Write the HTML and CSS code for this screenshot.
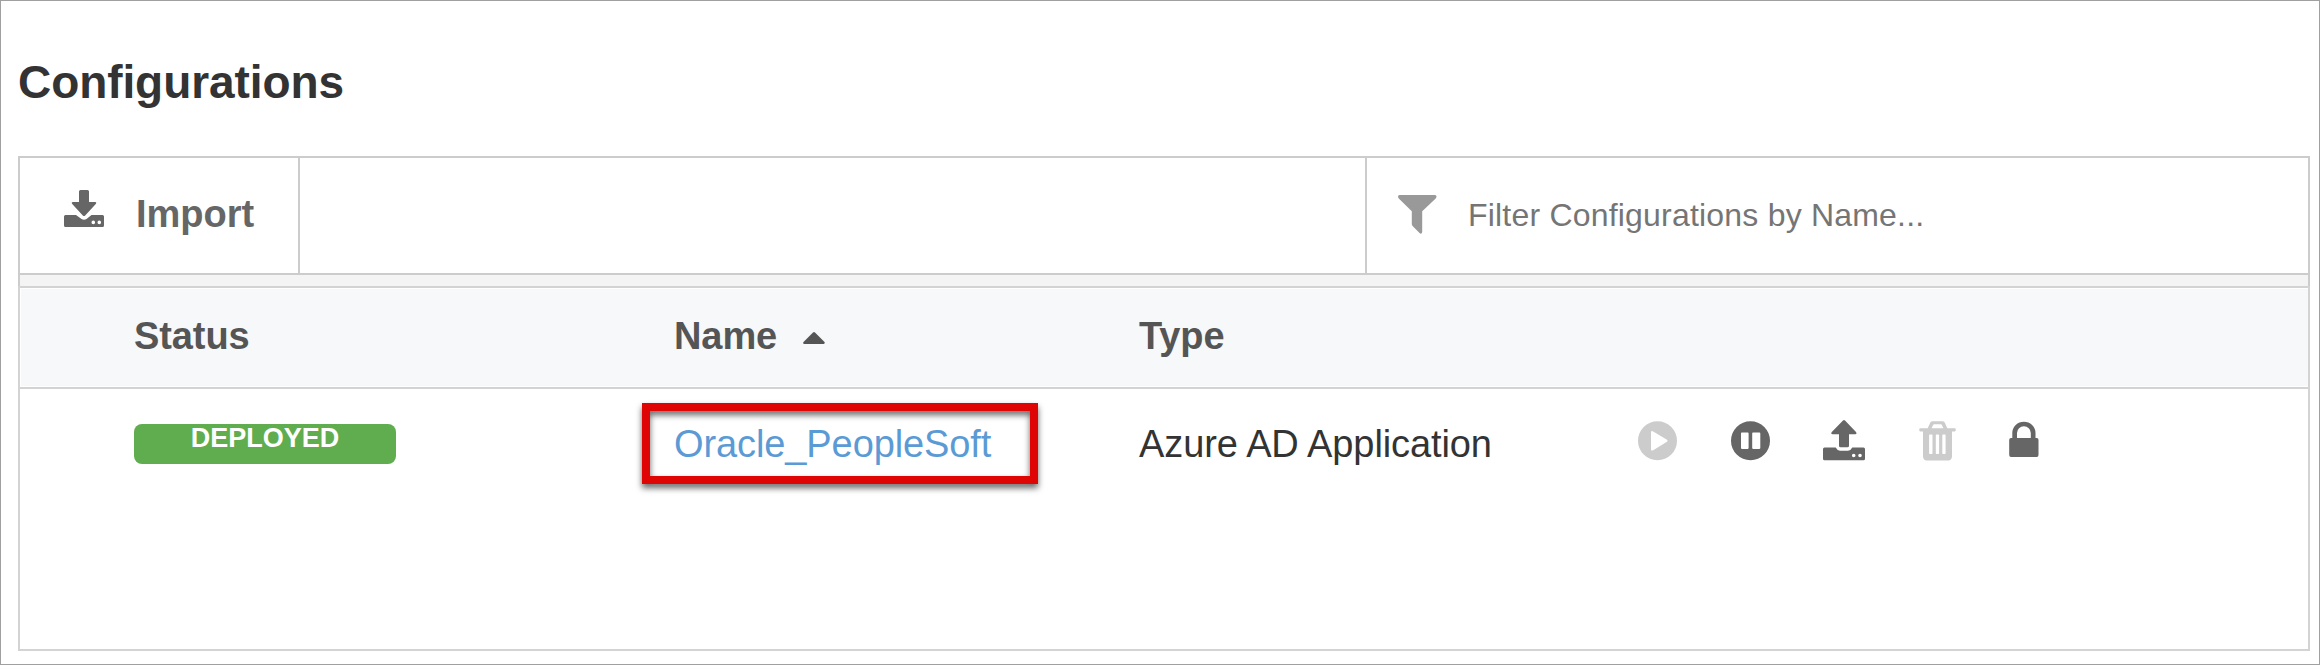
FILE: index.html
```html
<!DOCTYPE html>
<html lang="en">
<head>
<meta charset="utf-8">
<title>Configurations</title>
<link rel="stylesheet" href="styles.css">
</head>
<body>
<main class="page">
  <h1 class="title">Configurations</h1>
  <section class="panel">
    <div class="toolbar">
      <button class="import" type="button">
        <svg class="import-icon" width="40" height="37" viewBox="0 0 40 37" fill="#666">
          <path d="M16.500 0h7q1.500 0 1.500 1.500V12h6.200q1.800.2.800 1.700L21.200 25.400q-1.200 1-2.400 0L8 13.700q-1-1.500.8-1.700H15V1.500Q15 0 16.500 0z"/>
          <path fill-rule="evenodd" d="M1.500 25H12l5.500 4q2.500 1.500 5 0l5-4h11q1.500 0 1.500 1.500v9q0 1.500-1.500 1.500h-37Q0 37 0 35.500v-9Q0 25 1.500 25zM29.300 30.600a1.800 1.800 0 1 0 0 3.600 1.800 1.800 0 0 0 0-3.600zm6 0a1.800 1.800 0 1 0 0 3.600 1.800 1.800 0 0 0 0-3.600z"/>
        </svg>
        <span>Import</span>
      </button>
      <label class="filter">
        <svg width="39" height="39" viewBox="0 0 39 39" fill="#999">
          <path d="M1.500 0h35.500q1.500.2 1.500 1.500 0 1-.8 1.900L24.200 16.200V37q-.5 2.400-2.400 1.300L14.600 31q-.8-.9-.8-2V16.200L.8 3.400Q0 2.500 0 1.500 0 .2 1.500 0z"/>
        </svg>
        <input class="filter-input" type="text" placeholder="Filter Configurations by Name...">
      </label>
    </div>
    <div class="strip"></div>
    <div class="grid">
      <div class="columns head">
        <span>Status</span>
        <span class="sorted">Name
          <svg class="caret" width="22" height="12" viewBox="0 0 22 12" fill="#555"><path d="M10 .5q1-.8 2 0L21.500 10q.8 1.400-.8 2H1.200Q-.4 11.400.5 10z"/></svg>
        </span>
        <span>Type</span>
      </div>
      <div class="columns row">
        <span class="badge">DEPLOYED</span>
        <span class="name"><a class="link">Oracle_PeopleSoft</a><i class="highlight"></i></span>
        <span class="type">Azure AD Application</span>
        <div class="actions">
          <svg width="39" height="41" viewBox="0 0 39 41" fill="#ccc"><path fill-rule="evenodd" d="M19.500 1.300a19.500 19.500 0 1 0 0 39 19.500 19.500 0 0 0 0-39zM13 12.200q.2-1.700 1.800-1L29 19.800q1.300 1 0 2L14.800 30.400q-1.600.7-1.800-1z"/></svg>
          <svg width="39" height="41" viewBox="0 0 39 41" fill="#666"><path fill-rule="evenodd" d="M19.500 1.300a19.500 19.500 0 1 0 0 39 19.500 19.500 0 0 0 0-39zM10.800 12.600h6q.8 0 .8.800v14.700q0 .8-.8.800h-6q-.8 0-.8-.8V13.400q0-.8.8-.8zm11.200 0h6.500q.8 0 .8.800v14.700q0 .8-.8.800H22q-.8 0-.8-.8V13.400q0-.8.8-.8z"/></svg>
          <svg width="42" height="41" viewBox="0 0 42 41" fill="#666">
            <path d="M20 .5q1-.8 2 0L33 12q1.300 1.800-.8 2.200H26v11.500q0 1.500-1.500 1.500h-7q-1.500 0-1.500-1.500V14.200H9.600Q7.400 13.800 8.800 12z"/>
            <path fill-rule="evenodd" d="M1.500 27.500h11.200q1.600 3.200 4.300 3.200h8q2.700 0 4.300-3.200h11.200q1.500 0 1.500 1.500v9.800q0 1.500-1.500 1.500h-39Q0 40.300 0 38.800V29q0-1.500 1.500-1.500zM30.700 33.700a1.800 1.800 0 1 0 0 3.600 1.800 1.800 0 0 0 0-3.600zm6.300 0a1.800 1.800 0 1 0 0 3.600 1.800 1.800 0 0 0 0-3.600z"/>
          </svg>
          <svg width="37" height="41" viewBox="0 0 37 41" fill="#ccc"><path fill-rule="evenodd" d="M1.200 8.300h7.500L11.300 2.600q.8-1.300 2.400-1.300h9.600q1.600 0 2.400 1.300l2.600 5.700h7.500q.9.200.9.900v1.300q0 .8-.9.900H33V36.500q-.4 3.800-3.700 4H7.700Q4.400 40.300 4 36.500V11.400H1.200q-.9-.1-.9-.9V9.200q0-.7.9-.9zM12.600 8.300h11.800l-1.600-3.500q-.3-.5-.9-.5h-6.800q-.6 0-.9.500zM10.900 14.500q-.8 0-.8.800v17.900q0 .8.800.8h1.800q.8 0 .8-.8V15.300q0-.8-.8-.8zm6.700 0q-.8 0-.8.800v17.900q0 .8.8.8h1.700q.8 0 .8-.8V15.300q0-.8-.8-.8zm6.500 0q-.8 0-.8.800v17.900q0 .8.8.8h1.700q.8 0 .8-.8V15.300q0-.8-.8-.8z"/></svg>
          <svg width="30" height="41" viewBox="0 0 30 41" fill="#666"><path fill-rule="evenodd" d="M3.300 18v-5A11.600 11.300 0 0 1 26.500 13v5h1.300q1.700.2 1.700 2V35q0 1.800-1.700 2H2Q.3 36.800.2 35V20q.1-1.800 1.800-2zM8 18H21.800v-5A6.900 6.700 0 0 0 8 13z"/></svg>
        </div>
      </div>
    </div>
  </section>
</main>
</body>
</html>
```
FILE: styles.css
```css
* {
  box-sizing: border-box;
}

body {
  margin: 0;
  background: #fff;
  font-family: "Liberation Sans", Arial, sans-serif;
  font-size: 38px;
  color: #333;
}

svg {
  display: block;
  flex: none;
}

.page {
  display: flex;
  flex-direction: column;
  height: 665px;
  padding: 51px 9px 13px 17px;
  border: 1px solid #a0a0a0;
}

.title {
  margin: 0 0 44px;
  font-size: 46px;
  line-height: 60px;
  letter-spacing: -.08px;
}

.panel {
  display: flex;
  flex: 1;
  flex-direction: column;
}

.toolbar {
  display: flex;
  justify-content: space-between;
  height: 119px;
  border: 2px solid #ccc;
}

.import {
  display: flex;
  align-items: center;
  gap: 32px;
  width: 280px;
  padding: 0 0 3px 44px;
  border: 0;
  border-right: 2px solid #ccc;
  background: none;
  font: bold 38px/48px "Liberation Sans", Arial, sans-serif;
  color: #666;
}

.import-icon {
  margin-bottom: 11px;
}

.filter {
  display: flex;
  align-items: center;
  gap: 31px;
  width: 943px;
  padding: 0 0 2px 31px;
  border-left: 2px solid #ccc;
}

.filter-input {
  flex: 1;
  padding: 0;
  border: 0;
  outline: 0;
  font: 32px/40px "Liberation Sans", Arial, sans-serif;
  letter-spacing: .2px;
}

.filter-input::placeholder {
  color: #757575;
}

.strip {
  height: 11px;
  border: solid #ccc;
  border-width: 0 2px;
  background: #f4f4f4;
}

.grid {
  flex: 1;
  border: 2px solid #d3d3d3;
}

.columns {
  display: grid;
  grid-template-columns: 540px 465px 499px 1fr;
  padding-left: 114px;
}

.head {
  align-items: center;
  height: 101px;
  padding-bottom: 3px;
  border-bottom: 2px solid #d3d3d3;
  background: #f6f8fa;
  box-shadow: inset 1px 1px #fff, inset 0 -1px #fff;
  font-weight: bold;
  line-height: 48px;
  letter-spacing: -.1px;
  color: #555;
}

.sorted {
  display: flex;
  align-items: center;
  gap: 26px;
}

.caret {
  margin-top: 4px;
}

.row {
  align-items: start;
  padding-top: 31px;
  line-height: 48px;
  letter-spacing: -.1px;
}

.badge {
  width: 262px;
  height: 40px;
  margin-top: 4px;
  border-radius: 8px;
  background: #5fad4e;
  font-size: 27px;
  font-weight: bold;
  line-height: 29px;
  letter-spacing: 0;
  text-align: center;
  color: #fff;
}

.name {
  position: relative;
}

.link {
  color: #5b9bd5;
}

/* Callout frame drawn over the table around the name */
.highlight {
  position: absolute;
  top: -17px;
  left: -32px;
  width: 396px;
  height: 81px;
  border: 8px solid #e00505;
  filter: drop-shadow(0 4px 3px rgba(0, 0, 0, .6));
}

.actions {
  display: flex;
  gap: 53.500px;
}
```
